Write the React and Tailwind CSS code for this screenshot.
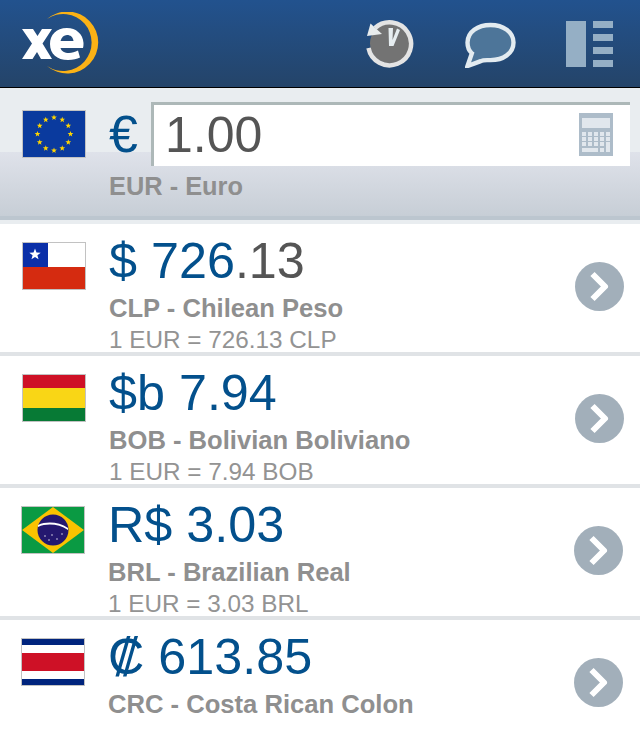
const F = { fontFamily: '"Liberation Sans", Arial, sans-serif' };

function Logo() {
  return (
    <svg width="80" height="66" viewBox="0 0 80 66" className="shrink-0">
      <path d="M25 7 A31 31 0 1 1 25 54 A28.5 28.5 0 1 0 25 7 Z" fill="#fbb216" />
      <path d="M0 17 L11 17 L15.500 24 L20 17 L30 17 L20.500 31.500 L30 47 L19 47 L15 40 L10.500 47 L0 47 L10 31.500 Z" fill="#fff" />
      <path d="M45 16 C34 16 28 23 28 32 C28 42 35 48 46 48 C51 48 55 47 58 45.500 L56 38.500 C53 40 50 41 47 41 C42.500 41 39.500 39.500 38.500 36 L61 36 C61.500 34 61.500 33 61.500 31 C61 22 54 16 45 16 Z M38.500 29 C39.500 25 42 23 45 23 C48.500 23 51 25 51.500 29 Z" fill="#fff" />
    </svg>
  );
}

function History() {
  return (
    <svg width="50" height="50" viewBox="0 0 50 50" className="shrink-0">
      <circle cx="25" cy="24.500" r="20" fill="#737373" />
      <path d="M3.500 29 A21.500 21.500 0 1 0 10 9" fill="none" stroke="#e4e4e4" strokeWidth="4.500" />
      <polygon points="2,17 5.500,4.500 17,15" fill="#e8eced" />
      <path d="M23.500 9 L28 9 L27.500 21 L32 9.500 L35 11 L28.500 27 L24 27 Z" fill="#e6edf0" />
    </svg>
  );
}

function Bubble() {
  return (
    <svg width="51" height="46" viewBox="0 0 52 47" className="shrink-0">
      <path d="M2.500 45 L7 32 C3.500 29 2.500 25 2.500 21 C2.500 10 13 3 26 3 C39 3 49.500 10 49.500 21 C49.500 32 39 39 26 39 C22 39 19 38.500 16 40 Z" fill="#4d7599" stroke="#e3ebf0" strokeWidth="4.500" />
    </svg>
  );
}

function ListIcon() {
  return (
    <div className="flex gap-[7px] w-[47px] h-[46px] mt-[2px] shrink-0">
      <div className="w-[20px] bg-[#95afc5]" />
      <div className="flex-1 flex flex-col justify-between">
        <div className="h-[7px] bg-[#95afc5]" />
        <div className="h-[7px] bg-[#95afc5]" />
        <div className="h-[7px] bg-[#95afc5]" />
        <div className="h-[7px] bg-[#95afc5]" />
      </div>
    </div>
  );
}

function Calc() {
  const keys = [];
  for (let r = 0; r < 3; r++) for (let c = 0; c < 5; c++) {
    if (c === 4 && r === 2) continue;
    keys.push(<rect key={r + '-' + c} x={3 + c * 6} y={19 + r * 5} width="4" height="4" fill="#e1e7ed" />);
  }
  return (
    <svg width="34" height="43" viewBox="0 0 34 43" className="shrink-0">
      <rect width="34" height="43" fill="#adbcc9" />
      <rect x="3" y="5" width="28" height="10" fill="#e1e7ed" />
      {keys}
      <rect x="3" y="35" width="16" height="4" fill="#e1e7ed" />
      <rect x="21" y="35" width="4" height="4" fill="#e1e7ed" />
      <rect x="27" y="29" width="4" height="10" fill="#e1e7ed" />
    </svg>
  );
}

function star(cx, cy, r, fill, key) {
  const pts = [];
  for (let i = 0; i < 10; i++) {
    const a = -Math.PI / 2 + (i * Math.PI) / 5;
    const rr = i % 2 ? r * 0.42 : r;
    pts.push((cx + rr * Math.cos(a)).toFixed(2) + ',' + (cy + rr * Math.sin(a)).toFixed(2));
  }
  return <polygon key={key} points={pts.join(' ')} fill={fill} />;
}

function FlagFrame({ children }) {
  return (
    <svg width="64" height="48" viewBox="0 0 64 48" className="block shrink-0">
      {children}
      <rect x="0.500" y="0.500" width="63" height="47" fill="none" stroke="#c2c2c2" />
    </svg>
  );
}

function EU() {
  const s = [];
  for (let i = 0; i < 12; i++) {
    const a = (i * Math.PI) / 6;
    s.push(star(32 + 16.500 * Math.sin(a), 24 - 16.500 * Math.cos(a), 3, '#ffd500', i));
  }
  return <FlagFrame><rect width="64" height="48" fill="#0a3a9e" />{s}</FlagFrame>;
}

function Chile() {
  return (
    <FlagFrame>
      <rect width="64" height="48" fill="#fff" />
      <rect y="25" width="64" height="23" fill="#d52b10" />
      <rect width="26" height="25" fill="#0a2fa8" />
      {star(13, 12.500, 6, '#fff', 's')}
    </FlagFrame>
  );
}

function Bolivia() {
  return (
    <FlagFrame>
      <rect width="64" height="14" fill="#ce1126" />
      <rect y="14" width="64" height="20" fill="#f9d616" />
      <rect y="34" width="64" height="14" fill="#077a35" />
    </FlagFrame>
  );
}

function Brazil() {
  return (
    <FlagFrame>
      <rect width="64" height="48" fill="#0a9a43" />
      <polygon points="32,1 63,24 32,47 1,24" fill="#fac300" />
      <circle cx="32" cy="24" r="15.500" fill="#24186f" />
      <path d="M17 19 C26 15 38 16 47 22 L47 24 C38 18 26 17 17 21 Z" fill="#fff" />
      <circle cx="24" cy="30" r="0.700" fill="#fff" />
      <circle cx="31" cy="29" r="0.700" fill="#fff" />
      <circle cx="36" cy="33" r="0.700" fill="#fff" />
      <circle cx="28" cy="34" r="0.700" fill="#fff" />
      <circle cx="41" cy="28" r="0.700" fill="#fff" />
    </FlagFrame>
  );
}

function CostaRica() {
  return (
    <FlagFrame>
      <rect width="64" height="48" fill="#fff" />
      <rect width="64" height="7" fill="#00247d" />
      <rect y="15" width="64" height="18" fill="#ce1126" />
      <rect y="41" width="64" height="7" fill="#00247d" />
    </FlagFrame>
  );
}

function Chevron() {
  return (
    <svg width="49" height="49" viewBox="0 0 49 49" className="shrink-0">
      <circle cx="24.500" cy="24.500" r="24.500" fill="#a2afba" />
      <path d="M17.500 12 L30 24.500 L17.500 37" fill="none" stroke="#fff" strokeWidth="6" strokeLinejoin="round" />
    </svg>
  );
}

function Row({ flag, amount, dark, name, rate, shifted }) {
  return (
    <div className="flex h-[132px] shrink-0 border-b-[4px] border-[#e0e3e6] bg-white">
      <div className={shifted ? 'w-[107px] pt-[18px] pl-[21px] shrink-0' : 'w-[108px] pt-[18px] pl-[22px] shrink-0'}>{flag}</div>
      <div className="flex-1 min-w-0 pt-[7px] pl-[1px]">
        <div className="text-[50.300px] leading-[60px] text-[#03508c] whitespace-pre">
          {amount}
          {dark && <span className="text-[#555555]">{dark}</span>}
        </div>
        <div className="text-[25.600px] leading-[30px] mt-[2px] font-bold text-[#8f8f8f] whitespace-pre">{name}</div>
        {rate && <div className="text-[24.300px] leading-[26px] mt-[4px] text-[#939393] whitespace-pre">{rate}</div>}
      </div>
      <div className={shifted ? 'flex items-center pr-[17px] pb-[4px]' : 'flex items-center pr-[16px] pb-[4px]'}><Chevron /></div>
    </div>
  );
}

export default function App() {
  return (
    <div style={F} className="w-[640px] h-[745px] overflow-hidden bg-white flex flex-col">
      <header className="h-[88px] shrink-0 flex items-start justify-between border-b border-black bg-gradient-to-b from-[#22528e] to-[#244469]">
        <div className="pl-[22px] pt-[12px]"><Logo /></div>
        <div className="flex items-start gap-[50px] pt-[19px] pr-[27px]">
          <History />
          <div className="mt-[3px]"><Bubble /></div>
          <ListIcon />
        </div>
      </header>
      <section className="h-[136px] shrink-0 relative bg-[#e9edf0]">
        <div className="absolute inset-x-0 top-[64px] bottom-[4px] bg-gradient-to-b from-[#dfe2ea] to-[#c7ced6] border-b-[4px] border-[#bcc6cf]" />
        <div className="relative flex pl-[22px] pt-[14px]">
          <div className="pt-[8px] w-[87px] shrink-0"><EU /></div>
          <div className="w-[42px] text-[52px] leading-[58px] pt-[3px] text-[#03508c] shrink-0">€</div>
          <div className="w-[479px] h-[64px] bg-white border-t-[3px] border-l-[3px] border-[#adb8b8] flex justify-between pl-[11px] pr-[17px]">
            <div className="text-[50px] leading-[60px] text-[#555555]">1.00</div>
            <div className="pt-[8px]"><Calc /></div>
          </div>
        </div>
        <div className="relative pl-[109px] pt-[5px] text-[25.400px] leading-[30px] font-bold text-[#8f8f8f]">EUR - Euro</div>
      </section>
      <Row flag={<Chile />} amount="$ 726" dark=".13" name="CLP - Chilean Peso" rate="1 EUR = 726.13 CLP" />
      <Row flag={<Bolivia />} amount="$b 7.94" name="BOB - Bolivian Boliviano" rate="1 EUR = 7.94 BOB" />
      <Row flag={<Brazil />} amount="R$ 3.03" name="BRL - Brazilian Real" rate="1 EUR = 3.03 BRL" shifted />
      <Row flag={<CostaRica />} amount="₡ 613.85" name="CRC - Costa Rican Colon" shifted />
    </div>
  );
}
